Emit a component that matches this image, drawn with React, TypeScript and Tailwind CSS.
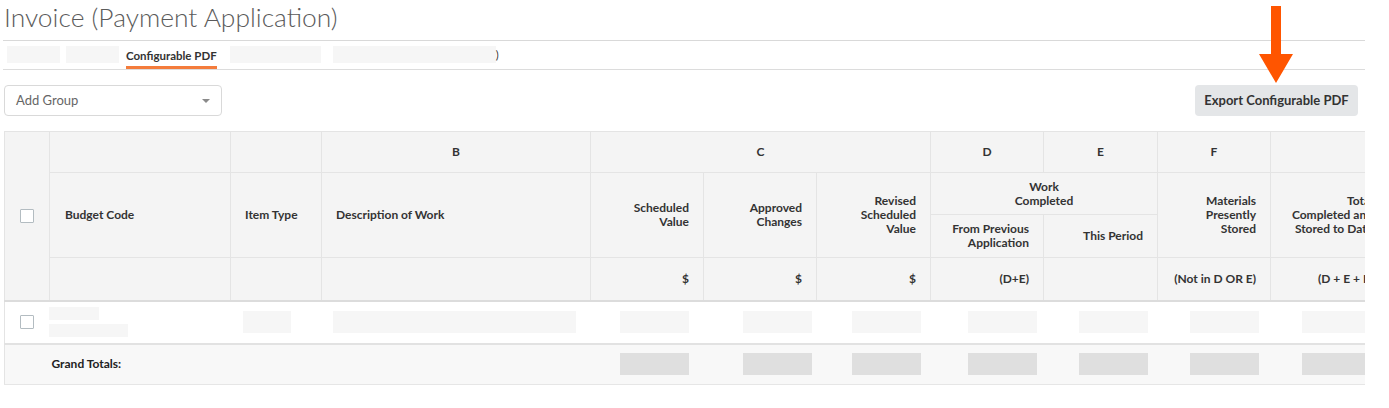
import React from "react";

const Box = ({ w, h, c, ml = 0 }: { w: number; h: number; c: string; ml?: number }) => (
  <div style={{ width: w, height: h, marginLeft: ml, backgroundColor: c }} />
);

const Checkbox = () => (
  <div className="mx-auto w-[14px] h-[14px] border-[1.5px] border-[#b3bcc1] bg-white rounded-[1px]" />
);

const th = "bg-[#f4f4f4] border border-[#e4e4e4] text-[12px] leading-[14px] font-bold text-[#333] align-middle whitespace-nowrap p-0";

export default function App() {
  const bodyOffsets = [29, 39, 35, 37, 35, 32, 31];
  return (
    <div
      className="relative w-[1389px] h-[408px] bg-white overflow-hidden"
      style={{ fontFamily: "Lato, 'Noto Sans', sans-serif" }}
    >
      <div className="ml-[3px] w-[1362px]">
        <div className="h-[41px] border-b border-[#d9d9d9]">
          <h1 className="pt-[2px] pl-[1px] text-[26.4px] leading-[31px] font-light text-[#5b5b5b]">
            Invoice (Payment Application)
          </h1>
        </div>
        <div className="h-[29px] border-b border-[#dcdcdc] flex items-stretch">
          <div className="mt-[5px] ml-[4px] w-[53px] h-[17px] bg-[#f6f6f6]" />
          <div className="mt-[5px] ml-[6px] w-[53px] h-[17px] bg-[#f6f6f6]" />
          <div className="ml-[7px] flex flex-col justify-between">
            <span className="pt-[8px] text-[11.5px] leading-[14px] font-bold text-[#333] whitespace-nowrap">
              Configurable PDF
            </span>
            <div className="h-[3px] bg-[#f47c3c]" />
          </div>
          <div className="mt-[5px] ml-[13px] w-[91px] h-[17px] bg-[#f6f6f6]" />
          <div className="mt-[5px] ml-[12px] w-[163px] h-[17px] bg-[#f6f6f6]" />
          <span className="pt-[7px] text-[11px] leading-[14px] text-[#333]">)</span>
        </div>
        <div className="mt-[15px] flex justify-between items-center">
          <div className="ml-[1px] w-[218px] h-[31px] border border-[#d9d9d9] rounded-[4px] flex items-center justify-between pl-[11px] pr-[11px]">
            <span className="text-[13px] text-[#666]">Add Group</span>
            <div className="w-0 h-0 border-l-[4px] border-r-[4px] border-t-[4px] border-l-transparent border-r-transparent border-t-[#8a8a8a]" />
          </div>
          <button className="mr-[7px] w-[163px] h-[31px] rounded-[4px] bg-[#e4e6e8] text-[13px] font-bold text-[#333] whitespace-nowrap">
            Export Configurable PDF
          </button>
        </div>
        <div className="mt-[15px] ml-[1px] w-[1361px] overflow-hidden">
          <table className="border-collapse table-fixed w-[1383px]">
            <colgroup>
              <col style={{ width: 45 }} />
              <col style={{ width: 181 }} />
              <col style={{ width: 91 }} />
              <col style={{ width: 269 }} />
              <col style={{ width: 113 }} />
              <col style={{ width: 113 }} />
              <col style={{ width: 114 }} />
              <col style={{ width: 113 }} />
              <col style={{ width: 114 }} />
              <col style={{ width: 113 }} />
              <col style={{ width: 117 }} />
            </colgroup>
            <thead>
              <tr className="h-[41px]">
                <th rowSpan={4} className={th}>
                  <Checkbox />
                </th>
                <th className={th}></th>
                <th className={th}></th>
                <th className={`${th} text-center`}>B</th>
                <th colSpan={3} className={`${th} text-center`}>C</th>
                <th className={`${th} text-center`}>D</th>
                <th className={`${th} text-center`}>E</th>
                <th className={`${th} text-center`}>F</th>
                <th className={th}></th>
              </tr>
              <tr className="h-[42px]">
                <th rowSpan={2} className={`${th} text-left pl-[15px]`}>Budget Code</th>
                <th rowSpan={2} className={`${th} text-left pl-[14px]`}>Item Type</th>
                <th rowSpan={2} className={`${th} text-left pl-[14px]`}>Description of Work</th>
                <th rowSpan={2} className={`${th} text-right pr-[14px]`}>
                  Scheduled
                  <br />
                  Value
                </th>
                <th rowSpan={2} className={`${th} text-right pr-[14px]`}>
                  Approved
                  <br />
                  Changes
                </th>
                <th rowSpan={2} className={`${th} text-right pr-[14px]`}>
                  Revised
                  <br />
                  Scheduled
                  <br />
                  Value
                </th>
                <th colSpan={2} className={`${th} text-center`}>
                  Work
                  <br />
                  Completed
                </th>
                <th rowSpan={2} className={`${th} text-right pr-[14px]`}>
                  Materials
                  <br />
                  Presently
                  <br />
                  Stored
                </th>
                <th rowSpan={2} className={`${th} text-right pr-[14px]`}>
                  Total
                  <br />
                  Completed and
                  <br />
                  Stored to Date
                </th>
              </tr>
              <tr className="h-[43px]">
                <th className={`${th} text-right pr-[14px]`}>
                  From Previous
                  <br />
                  Application
                </th>
                <th className={`${th} text-right pr-[14px]`}>This Period</th>
              </tr>
              <tr className="h-[43px] border-b-2 border-[#dcdcdc]">
                <th className={th}></th>
                <th className={th}></th>
                <th className={th}></th>
                <th className={`${th} text-right pr-[14px]`}>$</th>
                <th className={`${th} text-right pr-[14px]`}>$</th>
                <th className={`${th} text-right pr-[14px]`}>$</th>
                <th className={`${th} text-right pr-[14px]`}>(D+E)</th>
                <th className={th}></th>
                <th className={`${th} text-right pr-[14px]`}>(Not in D OR E)</th>
                <th className={`${th} text-right pr-[14px] border-b-2 border-b-[#dcdcdc]`}>(D + E + F)</th>
              </tr>
            </thead>
            <tbody>
              <tr className="h-[43px] bg-white border-b-2 border-[#e2e2e2] border-l border-l-[#e4e4e4]">
                <td className="p-0 align-middle">
                  <Checkbox />
                </td>
                <td className="p-0 align-middle">
                  <div className="flex flex-col gap-[4px]">
                    <Box w={50} h={13} c="#f6f6f6" ml={-1} />
                    <Box w={79} h={13} c="#f6f6f6" ml={-1} />
                  </div>
                </td>
                <td className="p-0 align-middle">
                  <Box w={48} h={22} c="#f6f6f6" ml={12} />
                </td>
                <td className="p-0 align-middle">
                  <Box w={243} h={22} c="#f6f6f6" ml={11} />
                </td>
                {bodyOffsets.map((o, i) => (
                  <td key={i} className="p-0 align-middle">
                    <Box w={69} h={22} c="#f6f6f6" ml={o} />
                  </td>
                ))}
              </tr>
              <tr className="h-[41px] bg-[#f8f8f8] border-b border-[#e6e6e6] border-l border-l-[#e4e4e4]">
                <td className="p-0"></td>
                <td className="p-0 pl-[2px] align-middle text-[12px] font-bold text-[#222] whitespace-nowrap">
                  Grand Totals:
                </td>
                <td className="p-0"></td>
                <td className="p-0"></td>
                {bodyOffsets.map((o, i) => (
                  <td key={i} className="p-0 align-middle">
                    <Box w={69} h={22} c="#dfdfdf" ml={o} />
                  </td>
                ))}
              </tr>
            </tbody>
          </table>
        </div>
      </div>
      <svg
        className="absolute left-[1259px] top-[6px]"
        width="34"
        height="77"
        viewBox="0 0 34 77"
      >
        <polygon points="12,0 22,0 22,48 34,48 17,77 0,48 12,48" fill="#ff5500" />
      </svg>
    </div>
  );
}
